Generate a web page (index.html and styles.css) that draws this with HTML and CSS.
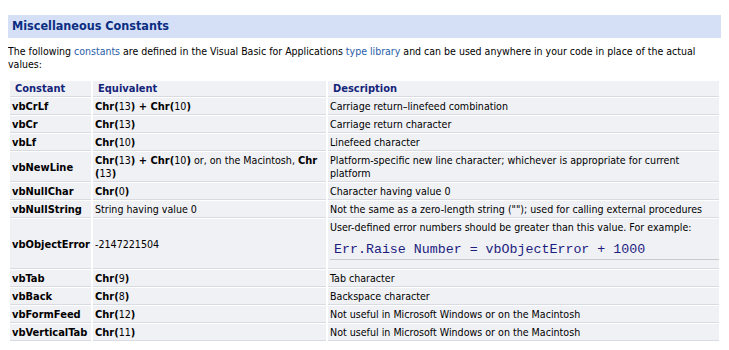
FILE: index.html
```html
<!DOCTYPE html>
<html lang="en">
<head>
    <meta charset="UTF-8">
    <title>Miscellaneous Constants</title>
    <link rel="stylesheet" href="styles.css">
</head>
<body>
    <h2 class="section-title">Miscellaneous Constants</h2>
    <p class="intro">The following <a href="#">constants</a> are defined in the Visual Basic for Applications <a href="#">type library</a> and can be used anywhere in your code in place of the actual values:</p>
    <table class="const-table">
        <colgroup>
            <col class="col-name">
            <col class="col-equiv">
            <col>
        </colgroup>
        <tr>
            <th>Constant</th>
            <th>Equivalent</th>
            <th>Description</th>
        </tr>
        <tr>
            <td><b>vbCrLf</b></td>
            <td><b>Chr(</b>13<b>) + Chr(</b>10<b>)</b></td>
            <td>Carriage return&ndash;linefeed combination</td>
        </tr>
        <tr>
            <td><b>vbCr</b></td>
            <td><b>Chr(</b>13<b>)</b></td>
            <td>Carriage return character</td>
        </tr>
        <tr>
            <td><b>vbLf</b></td>
            <td><b>Chr(</b>10<b>)</b></td>
            <td>Linefeed character</td>
        </tr>
        <tr>
            <td><b>vbNewLine</b></td>
            <td><b>Chr(</b>13<b>) + Chr(</b>10<b>)</b> or, on the Macintosh, <b>Chr</b> <b>(</b>13<b>)</b></td>
            <td>Platform-specific new line character; whichever is appropriate for current platform</td>
        </tr>
        <tr>
            <td><b>vbNullChar</b></td>
            <td><b>Chr(</b>0<b>)</b></td>
            <td>Character having value 0</td>
        </tr>
        <tr>
            <td><b>vbNullString</b></td>
            <td>String having value 0</td>
            <td>Not the same as a zero-length string (""); used for calling external procedures</td>
        </tr>
        <tr>
            <td><b>vbObjectError</b></td>
            <td>-2147221504</td>
            <td class="with-code">User-defined error numbers should be greater than this value. For example:
                <pre class="code">Err.Raise Number = vbObjectError + 1000</pre>
            </td>
        </tr>
        <tr>
            <td><b>vbTab</b></td>
            <td><b>Chr(</b>9<b>)</b></td>
            <td>Tab character</td>
        </tr>
        <tr>
            <td><b>vbBack</b></td>
            <td><b>Chr(</b>8<b>)</b></td>
            <td>Backspace character</td>
        </tr>
        <tr>
            <td><b>vbFormFeed</b></td>
            <td><b>Chr(</b>12<b>)</b></td>
            <td>Not useful in Microsoft Windows or on the Macintosh</td>
        </tr>
        <tr>
            <td><b>vbVerticalTab</b></td>
            <td><b>Chr(</b>11<b>)</b></td>
            <td>Not useful in Microsoft Windows or on the Macintosh</td>
        </tr>
    </table>
</body>
</html>
```

FILE: styles.css
```css
body {
    font-family: "DejaVu Sans Condensed", "DejaVu Sans", sans-serif;
    font-size: 10.6px;
    line-height: 13px;
    color: #000;
    background-color: #fff;
    margin: 8px;
}

.section-title {
    margin: 7px 0 0 0;
    padding: 4px 4px 5px 4px;
    background-color: #d5e0f7;
    color: #0b2d82;
    font-size: 12.5px;
    line-height: 14px;
}

.intro {
    margin: 7px 0 0 0;
    font-size: 10.5px;
}

.intro a {
    color: #2a5ea8;
    text-decoration: none;
}

.const-table {
    table-layout: fixed;
    width: 100%;
    margin-top: 9px;
    border-collapse: separate;
    border-spacing: 2px 1px;
}

.col-name {
    width: 81px;
}

.col-equiv {
    width: 233px;
}

.const-table th,
.const-table td {
    background-color: #f0f1f5;
    border-bottom: 1px solid #d9dbe2;
    text-align: left;
    vertical-align: middle;
    padding: 2px 0 1px 2px;
}

.const-table th {
    color: #14247a;
    font-size: 11px;
    padding: 1px 0 1px 5px;
}

.const-table b {
    font-size: 11px;
}

.const-table td.with-code {
    padding-bottom: 0;
}

.code {
    margin: 9px 0 8px 0;
    padding: 0 4px 2px 4px;
    border-bottom: 1px solid #c8cad0;
    font-family: "Liberation Mono", monospace;
    font-size: 13.3px;
    line-height: 14px;
    color: #1d1d80;
}
```
